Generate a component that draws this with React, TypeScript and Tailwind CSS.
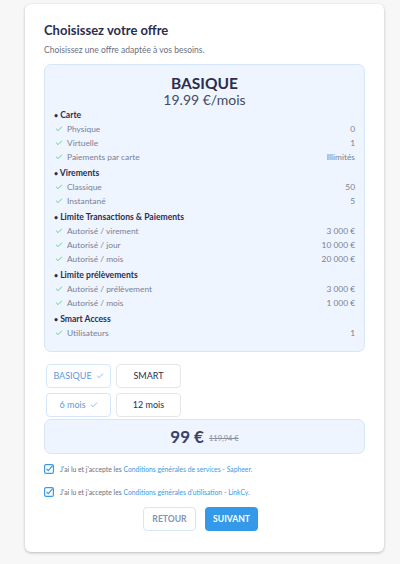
import { Check } from "lucide-react";

const sections = [
  {
    title: "Carte",
    items: [
      ["Physique", "0"],
      ["Virtuelle", "1"],
      ["Paiements par carte", "Illimités"],
    ],
  },
  {
    title: "Virements",
    items: [
      ["Classique", "50"],
      ["Instantané", "5"],
    ],
  },
  {
    title: "Limite Transactions & Paiements",
    items: [
      ["Autorisé / virement", "3 000 €"],
      ["Autorisé / jour", "10 000 €"],
      ["Autorisé / mois", "20 000 €"],
    ],
  },
  {
    title: "Limite prélèvements",
    items: [
      ["Autorisé / prélèvement", "3 000 €"],
      ["Autorisé / mois", "1 000 €"],
    ],
  },
  {
    title: "Smart Access",
    items: [["Utilisateurs", "1"]],
  },
];

const CheckBox = () => (
  <svg width="10" height="10" viewBox="0 0 10 10" className="shrink-0">
    <rect x="0.6" y="0.6" width="8.8" height="8.8" rx="1.5" fill="none" stroke="#3b9ae1" strokeWidth="1.2" />
    <path d="M2.6 5 L4.3 6.7 L8.6 1.6" fill="none" stroke="#3b9ae1" strokeWidth="1.2" />
  </svg>
);

export default function App() {
  return (
    <div
      className="w-[400px] h-[564px] bg-[#f7f7f7] pt-[4px] overflow-hidden"
      style={{ fontFamily: 'Lato, sans-serif' }}
    >
      <div className="mx-[25px] w-[359px] h-[548px] bg-white rounded-[6px] shadow-[0_1px_3px_rgba(0,0,0,0.25)] px-[19px] pt-[18px]">
        <h1 className="text-[13px] font-bold text-[#2b2d4f] leading-[17px]">Choisissez votre offre</h1>
        <p className="text-[8.5px] text-[#6b6f80] mt-[6px] leading-[11px]">Choisissez une offre adaptée à vos besoins.</p>

        <div className="mt-[8px] bg-[#eef5ff] border border-[#d5e5fb] rounded-[7px] px-[9px] pt-[9px] pb-[9px] text-[#2b2d4f]">
          <div className="text-center text-[15.5px] font-bold leading-[18px]">BASIQUE</div>
          <div className="text-center text-[14px] text-[#454a66] leading-[16px]">19.99 €/mois</div>
          {sections.map((s) => (
            <div key={s.title} className="mb-[2px]">
              <div className="text-[8.6px] font-bold leading-[14px]">
                <span className="text-[7px]">•</span> {s.title}
              </div>
              {s.items.map(([l, v]) => (
                <div key={l} className="flex items-center h-[14px] text-[8.4px] text-[#7a7f94]">
                  <Check className="w-[8px] h-[8px] text-[#4cc97a] ml-[1px] mr-[4px]" strokeWidth={2.5} />
                  <span className="flex-1">{l}</span>
                  <span>{v}</span>
                </div>
              ))}
            </div>
          ))}
        </div>

        <div className="mt-[12px] flex gap-[5px] pl-[2px]">
          <button className="w-[65px] h-[24px] border border-[#d5e5fb] rounded-[4px] flex items-center justify-center gap-[4px] text-[9px] text-[#5a9ae0]">
            BASIQUE <Check className="w-[8px] h-[8px]" strokeWidth={2} />
          </button>
          <button className="w-[65px] h-[24px] border border-[#e6e6ea] rounded-[4px] flex items-center justify-center text-[9px] text-[#2b2d4f]">
            SMART
          </button>
        </div>
        <div className="mt-[5px] flex gap-[5px] pl-[2px]">
          <button className="w-[65px] h-[24px] border border-[#d5e5fb] rounded-[4px] flex items-center justify-center gap-[4px] text-[9px] text-[#5a9ae0]">
            6 mois <Check className="w-[8px] h-[8px]" strokeWidth={2} />
          </button>
          <button className="w-[65px] h-[24px] border border-[#e6e6ea] rounded-[4px] flex items-center justify-center text-[9px] text-[#2b2d4f]">
            12 mois
          </button>
        </div>

        <div className="mt-[2px] h-[35px] bg-[#eef5ff] border border-[#d5e5fb] rounded-[7px] flex items-center justify-center gap-[5px]">
          <span className="text-[17px] font-bold text-[#3d4260]">99 €</span>
          <span className="text-[7.5px] text-[#8a8ea0] line-through mt-[5px]">119,94 €</span>
        </div>

        <div className="mt-[10px] flex items-center gap-[6px] text-[6.8px] text-[#6b6f80] h-[10px]">
          <CheckBox />
          <span>
            J'ai lu et j'accepte les <span className="text-[#3b9ae1]">Conditions générales de services - Sapheer.</span>
          </span>
        </div>
        <div className="mt-[13px] flex items-center gap-[6px] text-[6.8px] text-[#6b6f80] h-[10px]">
          <CheckBox />
          <span>
            J'ai lu et j'accepte les <span className="text-[#3b9ae1]">Conditions générales d'utilisation - LinkCy.</span>
          </span>
        </div>

        <div className="mt-[10px] flex justify-center gap-[9px] pr-[8px]">
          <button className="w-[53px] h-[24px] border border-[#d5e5fb] rounded-[4px] text-[8.6px] text-[#8196b8] font-bold">
            RETOUR
          </button>
          <button className="w-[53px] h-[24px] bg-[#3399e8] rounded-[4px] text-[8.6px] text-white font-bold">
            SUIVANT
          </button>
        </div>
      </div>
    </div>
  );
}
